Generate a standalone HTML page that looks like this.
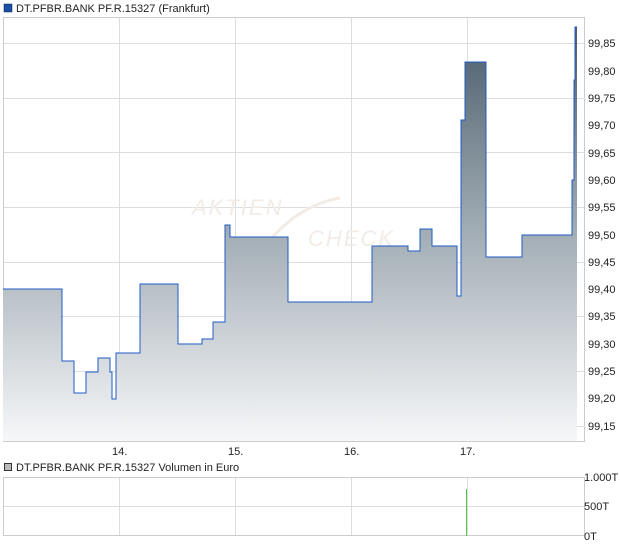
<!DOCTYPE html><html><head><style>body{margin:0;width:620px;height:546px;background:#fff;font-family:"Liberation Sans",sans-serif;overflow:hidden;position:relative}
</style></head><body>
<svg width="620" height="546" style="position:absolute;left:0;top:0" font-family="Liberation Sans" font-size="11" fill="#222">
<defs><linearGradient id="g" x1="0" y1="27" x2="0" y2="441" gradientUnits="userSpaceOnUse"><stop offset="0" stop-color="#4a5d6b"/><stop offset="0.45" stop-color="#9aa6ae"/><stop offset="1" stop-color="#f6f7f9"/></linearGradient></defs>
<rect x="4" y="4" width="8" height="8" fill="#1c4fa8" stroke="#123" stroke-width="0.5"/>
<text x="16" y="12">DT.PFBR.BANK PF.R.15327 (Frankfurt)</text>
<g stroke="#ddd" stroke-width="1">
<line x1="3" y1="43.5" x2="584" y2="43.5"/><line x1="3" y1="98.5" x2="584" y2="98.5"/><line x1="3" y1="152.5" x2="584" y2="152.5"/><line x1="3" y1="207.5" x2="584" y2="207.5"/><line x1="3" y1="262.5" x2="584" y2="262.5"/><line x1="3" y1="316.5" x2="584" y2="316.5"/><line x1="3" y1="371.5" x2="584" y2="371.5"/><line x1="3" y1="426.5" x2="584" y2="426.5"/>
<line x1="119.5" y1="17" x2="119.5" y2="441"/><line x1="235.5" y1="17" x2="235.5" y2="441"/><line x1="351.5" y1="17" x2="351.5" y2="441"/><line x1="467.5" y1="17" x2="467.5" y2="441"/>
</g>
<rect x="3.5" y="17.5" width="581" height="424" fill="none" stroke="#ccc"/>
<text x="192" y="215" font-size="22" fill="#f2ebe6" font-style="italic" letter-spacing="2">AKTIEN</text>
<text x="308" y="246" font-size="22" fill="#f2ebe6" font-style="italic" letter-spacing="2">CHECK</text>
<path d="M270 240 Q300 205 340 198" stroke="#f2ebe6" stroke-width="3" fill="none"/>
<path d="M3 289H62V361H74V393H86V372H98V358H110V372H112V399H116V353H140V284H178V344H202V339H213V322H225V225H230V237H288V302H372V246H408V251H420V229H432V246H457V296H461V120H465V62H486V257H522V235H572V180H574V80H575V27H577V441H3Z" fill="url(#g)"/>
<path d="M3 289H62V361H74V393H86V372H98V358H110V372H112V399H116V353H140V284H178V344H202V339H213V322H225V225H230V237H288V302H372V246H408V251H420V229H432V246H457V296H461V120H465V62H486V257H522V235H572V180H574V80H575V27H577" fill="none" stroke="#1f5bc6" stroke-width="1"/>
<g><text x="588" y="47">99,85</text><text x="588" y="75">99,80</text><text x="588" y="102">99,75</text><text x="588" y="129">99,70</text><text x="588" y="157">99,65</text><text x="588" y="184">99,60</text><text x="588" y="211">99,55</text><text x="588" y="239">99,50</text><text x="588" y="266">99,45</text><text x="588" y="293">99,40</text><text x="588" y="320">99,35</text><text x="588" y="348">99,30</text><text x="588" y="375">99,25</text><text x="588" y="402">99,20</text><text x="588" y="430">99,15</text></g>
<text x="112" y="455">14.</text><text x="228" y="455">15.</text><text x="344" y="455">16.</text><text x="460" y="455">17.</text>
<rect x="4.5" y="463.5" width="7" height="7" fill="#bbb" stroke="#333" stroke-width="1"/>
<text x="16" y="471">DT.PFBR.BANK PF.R.15327 Volumen in Euro</text>
<g stroke="#ddd"><line x1="3" y1="506.5" x2="584" y2="506.5"/><line x1="119.5" y1="477" x2="119.5" y2="536"/><line x1="235.5" y1="477" x2="235.5" y2="536"/><line x1="351.5" y1="477" x2="351.5" y2="536"/><line x1="467.5" y1="477" x2="467.5" y2="536"/></g>
<rect x="3.5" y="477.5" width="581" height="58" fill="none" stroke="#ccc"/>
<line x1="466.5" y1="489" x2="466.5" y2="536" stroke="#4c4" stroke-width="1"/>
<text x="584" y="481">1.000T</text><text x="584" y="510">500T</text><text x="584" y="540">0T</text>
</svg>
</body></html>
